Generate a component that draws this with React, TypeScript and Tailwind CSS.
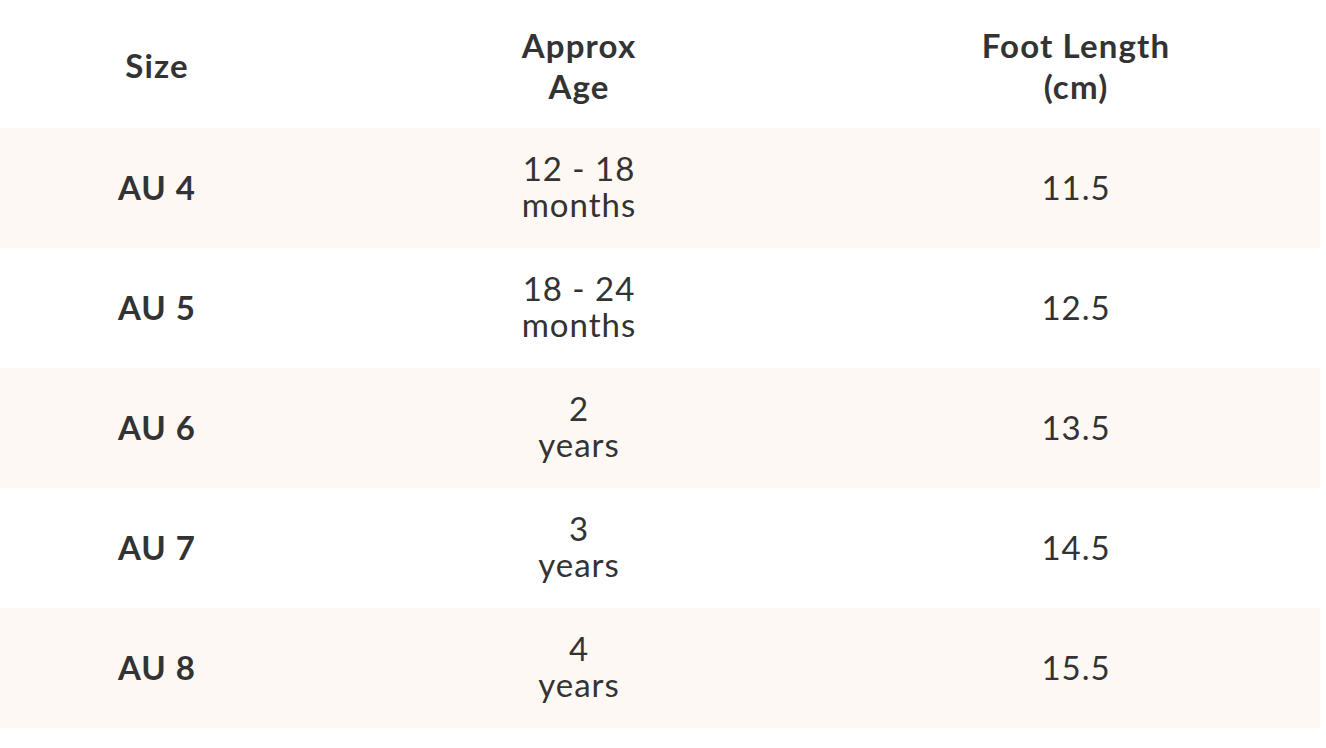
import React from "react";

const rows = [
  { size: "AU 4", age: ["12 - 18", "months"], foot: "11.5" },
  { size: "AU 5", age: ["18 - 24", "months"], foot: "12.5" },
  { size: "AU 6", age: ["2", "years"], foot: "13.5" },
  { size: "AU 7", age: ["3", "years"], foot: "14.5" },
  { size: "AU 8", age: ["4", "years"], foot: "15.5" },
];

export default function App() {
  return (
    <div className="min-h-[748px] bg-white font-['Lato',sans-serif] text-[#333333]">
      <div className="w-[1320px]">
        {/* Header */}
        <div className="grid h-[128px] grid-cols-[314px_530px_464px] items-center pt-[3px] text-center text-[33px] font-bold leading-[41px] tracking-[0.035em]">
          <div>Size</div>
          <div>
            Approx
            <br />
            Age
          </div>
          <div>
            Foot Length
            <br />
            (cm)
          </div>
        </div>

        {rows.map((r, i) => (
          <div
            key={r.size}
            className={`grid h-[120px] grid-cols-[314px_530px_464px] items-center text-center text-[33px] leading-[36px] tracking-[0.03em] ${
              i % 2 === 0 ? "bg-[#fef8f4]" : "bg-white"
            }`}
          >
            <div className="pb-[2px] font-bold">{r.size}</div>
            <div className="pb-[4px]">
              {r.age[0]}
              <br />
              {r.age[1]}
            </div>
            <div className="pb-[2px]">{r.foot}</div>
          </div>
        ))}
      </div>
    </div>
  );
}
